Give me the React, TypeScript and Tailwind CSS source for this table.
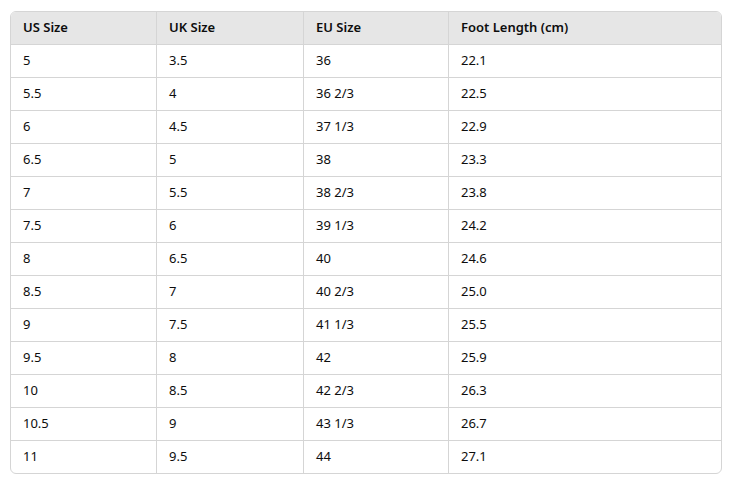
import React from 'react';

const headers = ['US Size', 'UK Size', 'EU Size', 'Foot Length (cm)'];

const rows: string[][] = [
  ['5', '3.5', '36', '22.1'],
  ['5.5', '4', '36 2/3', '22.5'],
  ['6', '4.5', '37 1/3', '22.9'],
  ['6.5', '5', '38', '23.3'],
  ['7', '5.5', '38 2/3', '23.8'],
  ['7.5', '6', '39 1/3', '24.2'],
  ['8', '6.5', '40', '24.6'],
  ['8.5', '7', '40 2/3', '25.0'],
  ['9', '7.5', '41 1/3', '25.5'],
  ['9.5', '8', '42', '25.9'],
  ['10', '8.5', '42 2/3', '26.3'],
  ['10.5', '9', '43 1/3', '26.7'],
  ['11', '9.5', '44', '27.1'],
];

const App: React.FC = () => {
  return (
    <div
      className="min-h-screen bg-white pt-[11px] pl-[10px] text-[#0d0d0d]"
      style={{ fontFamily: '"Noto Sans", "Open Sans", sans-serif' }}
    >
      <div className="w-[712px] rounded-[6px] border border-[#d5d5d5] overflow-hidden">
        <div className="grid grid-cols-[146px_147px_145px_272px]">
          {headers.map((h, i) => (
            <div
              key={h}
              className={
                'h-[33px] flex items-center pl-3 bg-[#e6e6e6] border-b border-[#d5d5d5] text-[13px] font-semibold ' +
                (i < 3 ? 'border-r' : '')
              }
            >
              {h}
            </div>
          ))}
          {rows.map((row, r) =>
            row.map((cell, i) => (
              <div
                key={r + '-' + i}
                className={
                  'flex items-center pl-3 border-[#d5d5d5] text-[13px] ' +
                  (r < rows.length - 1 ? 'h-[33px] border-b ' : 'h-[32px] ') +
                  (i < 3 ? 'border-r' : '')
                }
              >
                {cell}
              </div>
            ))
          )}
        </div>
      </div>
    </div>
  );
};

export default App;
